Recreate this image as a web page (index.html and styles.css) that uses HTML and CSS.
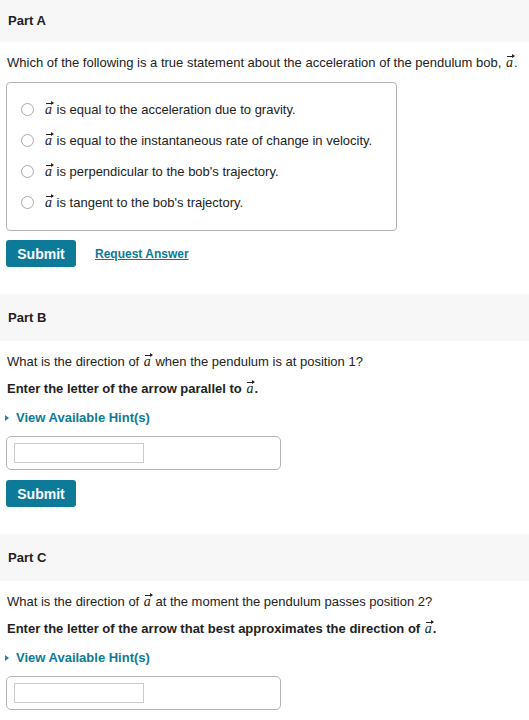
FILE: index.html
```html
<!DOCTYPE html>
<html lang="en">
<head>
  <meta charset="UTF-8" />
  <meta name="viewport" content="width=device-width, initial-scale=1.0" />
  <title>Pendulum Acceleration</title>
  <link rel="stylesheet" href="styles.css">
</head>
<body>

  <!-- Part A -->
  <div class="part">
    <div class="part-head first">Part A</div>
    <div class="part-body">
      <p class="question">Which of the following is a true statement about the acceleration of the pendulum bob, <span class="vec">a</span>.</p>
      <div class="choices">
        <label class="choice"><span class="radio"></span><span><span class="vec">a</span> is equal to the acceleration due to gravity.</span></label>
        <label class="choice"><span class="radio"></span><span><span class="vec">a</span> is equal to the instantaneous rate of change in velocity.</span></label>
        <label class="choice"><span class="radio"></span><span><span class="vec">a</span> is perpendicular to the bob's trajectory.</span></label>
        <label class="choice"><span class="radio"></span><span><span class="vec">a</span> is tangent to the bob's trajectory.</span></label>
      </div>
      <div class="actions">
        <button class="btn">Submit</button>
        <a class="request" href="#">Request Answer</a>
      </div>
    </div>
  </div>

  <!-- Part B -->
  <div class="part">
    <div class="part-head">Part B</div>
    <div class="part-body">
      <p class="question">What is the direction of <span class="vec">a</span> when the pendulum is at position 1?</p>
      <p class="instruction">Enter the letter of the arrow parallel to <span class="vec">a</span>.</p>
      <a class="hint" href="#">View Available Hint(s)</a>
      <div class="answer-box"><input type="text" class="answer" /></div>
      <div class="actions">
        <button class="btn">Submit</button>
      </div>
    </div>
  </div>

  <!-- Part C -->
  <div class="part">
    <div class="part-head">Part C</div>
    <div class="part-body">
      <p class="question">What is the direction of <span class="vec">a</span> at the moment the pendulum passes position 2?</p>
      <p class="instruction">Enter the letter of the arrow that best approximates the direction of <span class="vec">a</span>.</p>
      <a class="hint" href="#">View Available Hint(s)</a>
      <div class="answer-box"><input type="text" class="answer" /></div>
    </div>
  </div>

</body>
</html>
```

FILE: styles.css
```css
body {
  font-family: "Liberation Sans", Arial, sans-serif;
  font-size: 13px;
  line-height: 16px;
  margin: 0;
  padding: 0;
  background: #fff;
  color: #222;
}

.part-head {
  background: #f7f7f7;
  height: 47px;
  line-height: 48px;
  padding-left: 8px;
  font-weight: bold;
  color: #222;
}
.part-head.first {
  height: 42px;
  line-height: 42px;
}

.part-body {
  padding: 11px 6px 27px 6px;
}

p {
  margin: 0;
}
.question {
  padding-top: 2px;
  margin-bottom: 11px;
  padding-left: 1px;
}
.instruction {
  font-weight: bold;
  margin-bottom: 13px;
  padding-left: 1px;
}

/* vector a with a small arrow over it */
.vec {
  position: relative;
  display: inline-block;
  font-family: "Liberation Serif", "Times New Roman", serif;
  font-style: italic;
  font-size: 14px;
  line-height: 10px;
  font-weight: normal;
  padding: 0 1px;
}
.vec::before {
  content: "";
  position: absolute;
  left: 2px;
  top: -2px;
  width: 7px;
  height: 1px;
  background: #222;
}
.vec::after {
  content: "";
  position: absolute;
  left: 7px;
  top: -4px;
  border-left: 3px solid #222;
  border-top: 2.5px solid transparent;
  border-bottom: 2.5px solid transparent;
}

.choices {
  border: 1px solid #b3b3b3;
  border-radius: 4px;
  width: 389px;
  padding: 11px 0 12px;
  margin-bottom: 9px;
}
.choice {
  display: flex;
  align-items: center;
  height: 31px;
  padding-left: 14px;
  color: #222;
}
.radio {
  width: 11px;
  height: 11px;
  border: 1px solid #aaa;
  border-radius: 50%;
  margin-right: 10px;
  flex-shrink: 0;
}

.actions {
  display: flex;
  align-items: center;
  gap: 19px;
}
.btn {
  background: #0d7a99;
  color: #fff;
  border: none;
  border-radius: 3px;
  font-family: "Liberation Sans", Arial, sans-serif;
  font-size: 14px;
  font-weight: bold;
  width: 70px;
  height: 27px;
  padding: 0;
  cursor: pointer;
}
.request {
  color: #0d7a99;
  font-weight: bold;
  font-size: 12px;
  text-decoration: underline;
}

.hint {
  display: flex;
  align-items: center;
  color: #0d7a99;
  font-weight: bold;
  text-decoration: none;
  margin-bottom: 10px;
}
.hint::before {
  content: "";
  border-left: 4px solid #2f7f99;
  border-top: 3.5px solid transparent;
  border-bottom: 3.5px solid transparent;
  margin-right: 7px;
  margin-left: -1px;
}

.answer-box {
  border: 1px solid #b3b3b3;
  border-radius: 5px;
  width: 275px;
  height: 34px;
  padding: 6px 7px;
  box-sizing: border-box;
  margin-bottom: 10px;
}
.answer {
  display: block;
  width: 130px;
  height: 20px;
  box-sizing: border-box;
  border: 1px solid #ccc;
  padding: 0 3px;
  margin: 0;
}
```
